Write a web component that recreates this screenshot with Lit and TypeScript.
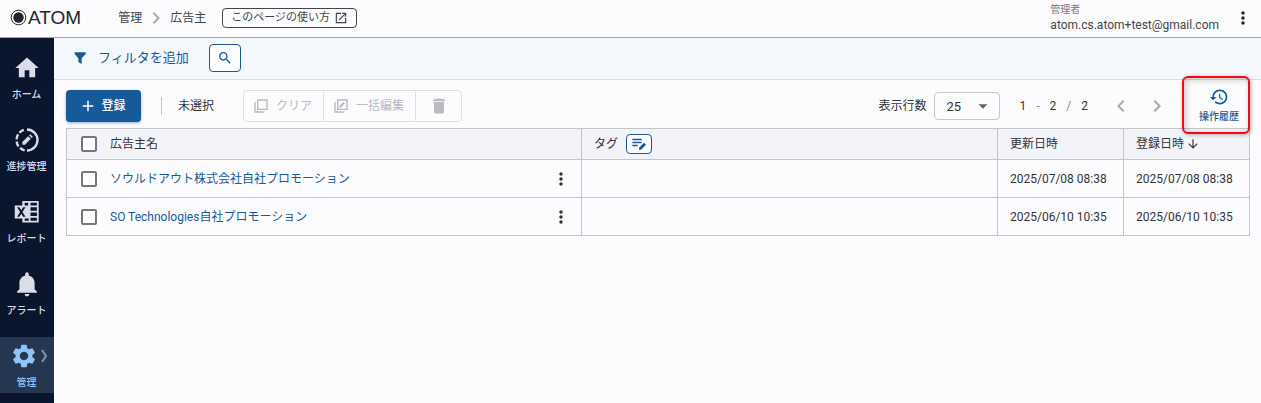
import { LitElement, html, css, svg } from "lit";
import { customElement, property, state } from "lit/decorators.js";
import { classMap } from "lit/directives/class-map.js";

const shapes = {
  home: svg`<path d="M10 20v-6h4v6h5v-8h3L12 3 2 12h3v8z"/>`,
  progress: svg`<g fill="none" stroke="currentColor" stroke-width="2"><path d="M12 3a9 9 0 0 1 0 18"/><path d="M10 20.800A9 9 0 0 1 3 12A9 9 0 0 1 10 3.200" stroke-dasharray="4.500 1.800"/></g><path d="M8 16v-2.300l5-5 2.300 2.300-5 5zM13.800 7.900l.9-.9 2.300 2.300-.9.9z"/>`,
  report: svg`<path fill-rule="evenodd" d="M8 2.500h14v18.500H8v-3.500H1.500v-11H8zm2 1.500v2.500h3V4zm5 0v2.500h5.500V4zm0 4v3h5.500V8zm0 4.500v3h5.500v-3zm0 4.500v2.500h5.500V17zm-5 .5v2h3.500v-2zM3.500 8l2.600 4-2.600 4h2l1.600-2.600L8.700 16h2l-2.600-4 2.600-4h-2l-1.600 2.600L5.500 8z"/>`,
  bell: svg`<path d="M12 22.500c1.100 0 2-.9 2-2h-4c0 1.100.9 2 2 2m6.500-6v-5.500c0-3.070-2-5.640-5-6.320V3.500c0-.83-.67-1.500-1.500-1.500s-1.500.67-1.500 1.500v1.180C7.500 5.360 5.500 7.920 5.500 11v5.500l-2 2v1h17v-1z"/>`,
  gear: svg`<path d="M19.140 12.940c.04-.3.060-.61.060-.94 0-.32-.02-.64-.07-.94l2.030-1.580c.18-.14.23-.41.120-.61l-1.920-3.320c-.12-.22-.37-.29-.59-.22l-2.390.96c-.5-.38-1.030-.7-1.620-.94l-.36-2.540c-.04-.24-.24-.41-.48-.41h-3.840c-.24 0-.43.17-.47.410l-.36 2.540c-.59.240-1.130.570-1.620.940l-2.390-.96c-.22-.08-.47 0-.59.220L2.740 8.870c-.12.210-.08.470.120.610l2.030 1.580c-.05.300-.09.630-.09.940s.02.640.070.940l-2.030 1.580c-.18.140-.23.410-.12.610l1.920 3.320c.120.220.370.290.590.220l2.390-.96c.5.380 1.030.700 1.620.940l.36 2.540c.05.240.240.410.480.410h3.840c.24 0 .44-.17.470-.41l.36-2.540c.59-.24 1.130-.56 1.620-.94l2.390.960c.22.080.470 0 .59-.22l1.920-3.320c.12-.22.070-.47-.12-.61zM12 15.600c-1.980 0-3.600-1.620-3.600-3.600s1.620-3.600 3.600-3.600 3.600 1.620 3.600 3.600-1.620 3.600-3.600 3.600"/>`,
  filter: svg`<path d="M4 3.500h16.500v2.500L14.500 12.500V21l-5-3v-5.500L4 6z"/>`,
  search: svg`<path d="M15.500 14h-.79l-.28-.27C15.410 12.590 16 11.110 16 9.500 16 5.910 13.090 3 9.500 3S3 5.910 3 9.500 5.910 16 9.500 16c1.610 0 3.090-.59 4.230-1.570l.27.280v.79l5 4.990L20.490 19zm-6 0C7.010 14 5 11.990 5 9.500S7.010 5 9.500 5 14 7.010 14 9.500 11.990 14 9.500 14"/>`,
  open: svg`<path d="M19 19H5V5h7V3H3v18h18v-9h-2zM14 3v2h3.590l-9.830 9.830 1.410 1.410L19 6.410V10h2V3z"/>`,
  plus: svg`<path d="M19 13h-6v6h-2v-6H5v-2h6V5h2v6h6z"/>`,
  clear: svg`<path d="M22 2H6v16h16zm-2 14H8V4h12zM2 6v16h15v-2H4V6z"/>`,
  bulk: svg`<path d="M22 2H6v16h16zm-2 14H8V4h12zM2 6v16h15v-2H4V6zM9.500 14.500v-2L16 6l2 2-6.500 6.500z"/>`,
  trash: svg`<path d="M6 19c0 1.100.9 2 2 2h8c1.100 0 2-.9 2-2V7H6zM19 4h-3.500l-1-1h-5l-1 1H5v2h14z"/>`,
  left: svg`<path d="M15.410 7.410 14 6l-6 6 6 6 1.410-1.410L10.830 12z"/>`,
  right: svg`<path d="M10 6 8.590 7.410 13.170 12l-4.580 4.590L10 18l6-6z"/>`,
  caret: svg`<path d="m6 9.500 6 6 6-6z"/>`,
  more: svg`<path d="M12 8c1.100 0 2-.9 2-2s-.9-2-2-2-2 .9-2 2 .9 2 2 2m0 2c-1.100 0-2 .9-2 2s.9 2 2 2 2-.9 2-2-.9-2-2-2m0 6c-1.100 0-2 .9-2 2s.9 2 2 2 2-.9 2-2-.9-2-2-2"/>`,
  history: svg`<path d="M13 3c-4.970 0-9 4.030-9 9H1l3.890 3.890.07.140L9 12H6c0-3.870 3.130-7 7-7s7 3.130 7 7-3.130 7-7 7c-1.930 0-3.680-.79-4.940-2.060l-1.420 1.420C8.270 19.990 10.510 21 13 21c4.970 0 9-4.030 9-9s-4.030-9-9-9m-1 5v5l4.280 2.540.72-1.210-3.500-2.080V8z"/>`,
  down: svg`<path d="m20 12-1.410-1.410L13 16.170V4h-2v12.170l-5.580-5.590L4 12l8 8z"/>`,
  tagEdit: svg`<path d="M2 4h14v2.500H2zM2 8.500h14v2.500H2zM2 13h8v2.500H2zM12 20.500v-3l7.500-7.500 3 3-7.500 7.500z"/>`,
};
type Shape = keyof typeof shapes;

@customElement("app-icon")
class AppIcon extends LitElement {
  @property() name: Shape = "home";
  @property({ type: Number }) size = 16;
  static styles = css`
    :host { display: inline-flex; flex: none; }
    svg { display: block; fill: currentColor; }
  `;
  render() {
    return html`<svg viewBox="0 0 24 24" width=${this.size} height=${this.size} aria-hidden="true">${shapes[this.name]}</svg>`;
  }
}

interface NavItem { icon: Shape; label: string; active?: boolean }
interface Advertiser { name: string; updated: string; created: string }

const nav: NavItem[] = [
  { icon: "home", label: "ホーム" },
  { icon: "progress", label: "進捗管理" },
  { icon: "report", label: "レポート" },
  { icon: "bell", label: "アラート" },
  { icon: "gear", label: "管理", active: true },
];

const rows: Advertiser[] = [
  { name: "ソウルドアウト株式会社自社プロモーション", updated: "2025/07/08 08:38", created: "2025/07/08 08:38" },
  { name: "SO Technologies自社プロモーション", updated: "2025/06/10 10:35", created: "2025/06/10 10:35" },
];

@customElement("app-root")
class AppRoot extends LitElement {
  @state() private selected = new Set<number>();

  static styles = css`
    :host {
      display: flex;
      flex-direction: column;
      min-height: 100vh;
      background: #fcfcfe;
      color: #333338;
      font: 12px/16px Roboto, "Noto Sans CJK JP", sans-serif;
      --blue: #175a9a;
      --line: #c4c5cb;
    }
    * { box-sizing: border-box; }
    a { color: inherit; text-decoration: none; }
    button {
      display: inline-flex;
      align-items: center;
      justify-content: center;
      padding: 0;
      border: 0;
      background: none;
      color: inherit;
      font: inherit;
      cursor: pointer;
    }
    .header {
      display: flex;
      align-items: center;
      height: 38px;
      padding: 0 8px 2px 10px;
      border-bottom: 1px solid #a3a4aa;
      box-shadow: 0 1px 2px rgba(0, 0, 0, 0.12);
    }
    .logo { display: flex; align-items: center; gap: 1px; color: #25252d; font: 19px/24px "Liberation Sans", sans-serif; }
    .crumbs { display: flex; align-items: center; gap: 2px; margin-left: 37px; color: #44444a; }
    .crumbs app-icon { color: #aaaab0; }
    .help {
      display: flex;
      align-items: center;
      gap: 4px;
      height: 20px;
      margin-left: 16px;
      padding: 0 8px;
      border: 1px solid #44444a;
      border-radius: 4px;
      color: #44444a;
      font-size: 11px;
    }
    .account { margin-left: auto; color: #44444a; }
    .role { color: #77778c; font-size: 10px; line-height: 14px; }
    .kebab { margin-left: 14px; color: #222226; }
    .body { display: flex; flex: 1; }
    .side {
      display: flex;
      flex-direction: column;
      gap: 16px;
      width: 54px;
      flex: none;
      padding-top: 11px;
      background: #0a162e;
      color: #d9dde8;
      font-size: 10px;
      font-weight: 500;
    }
    .item {
      display: flex;
      flex-direction: column;
      align-items: center;
      gap: 5px;
      height: 56px;
      padding: 5px 1px 0 0;
      position: relative;
    }
    .item.active { background: #253650; color: #90c4f8; }
    .item.active app-icon { margin-right: 5px; }
    .arrow { position: absolute; right: 6px; top: 11px; color: #7f95b2; }
    .main { flex: 1; min-width: 0; }
    .filters {
      display: flex;
      align-items: center;
      gap: 20px;
      height: 42px;
      padding: 0 18px 1px;
      border-bottom: 1px solid #d9dde4;
      background: #f4f8fd;
      color: var(--blue);
      font-size: 13px;
    }
    .add { gap: 10px; }
    .search { width: 32px; height: 28px; border: 1px solid var(--blue); border-radius: 4px; background: #fcfcfe; }
    .content { padding: 0 11px 0 12px; }
    .tools { display: flex; align-items: center; height: 48px; padding-top: 4px; position: relative; }
    .create {
      gap: 4px;
      width: 75px;
      height: 32px;
      padding-right: 2px;
      border-radius: 4px;
      background: var(--blue);
      color: #fff;
      font-weight: 500;
      box-shadow: 0 1px 3px rgba(23, 90, 154, 0.5);
    }
    .status { margin-left: 20px; padding-left: 16px; border-left: 1px solid var(--line); line-height: 18px; }
    .group { display: flex; height: 32px; margin-left: 29px; border: 1px solid #e0e0e4; border-radius: 4px; color: #bababf; }
    .group button { gap: 7px; padding: 0 11px 0 9px; color: inherit; cursor: default; }
    .group button + button { border-left: 1px solid #e0e0e4; }
    .group .delete { width: 46px; padding: 0; }
    .paging { display: flex; align-items: center; margin-left: auto; }
    .size { display: flex; align-items: center; gap: 8px; }
    .pick { display: grid; align-items: center; }
    .pick > * { grid-area: 1 / 1; }
    .pick app-icon { justify-self: end; margin-right: 8px; color: #66666a; pointer-events: none; }
    select {
      appearance: none;
      width: 66px;
      height: 28px;
      padding: 0 11px;
      border: 1px solid #c8c8cc;
      border-radius: 4px;
      background: transparent;
      color: inherit;
      font: 13px Roboto, sans-serif;
    }
    .range { display: flex; gap: 10px; margin: 0 21px 0 19px; }
    .muted { color: #88888e; }
    .pages { display: flex; gap: 12px; color: #aaaab0; }
    .history {
      flex-direction: column;
      width: 62px;
      margin-left: 19px;
      color: var(--blue);
      font-size: 10px;
      font-weight: 500;
    }
    .history app-icon { margin-bottom: 2px; }
    .marker {
      position: absolute;
      top: -4px;
      right: 0;
      width: 68px;
      height: 58px;
      border: 2px solid #f80810;
      border-radius: 6px;
      box-shadow: 1px 1px 4px rgba(0, 0, 0, 0.3), inset 2px 2px 6px rgba(0, 0, 0, 0.2);
      pointer-events: none;
    }
    table { width: 100%; table-layout: fixed; border-collapse: collapse; }
    th, td { height: 38px; padding: 0 12px; border: 1px solid var(--line); text-align: left; font-weight: 400; }
    th { height: 31px; background: #f3f4fa; }
    .name { width: 515px; }
    .date { width: 126px; }
    .cell { display: flex; align-items: center; }
    .who { gap: 13px; padding-left: 2px; }
    .who a { color: var(--blue); }
    .who .kebab { margin-left: auto; margin-right: -2px; color: #333338; }
    input {
      appearance: none;
      width: 16px;
      height: 16px;
      margin: 0;
      border: 2px solid #77777c;
      border-radius: 2px;
      background: #fff;
    }
    input:checked { border-color: var(--blue); background: var(--blue); }
    .tag { gap: 8px; }
    .tag button { width: 26px; height: 20px; border: 1px solid var(--blue); border-radius: 4px; color: var(--blue); background: #fcfcfe; }
    .sort { gap: 2px; }
  `;

  private toggle(index: number) {
    const next = new Set(this.selected);
    next.has(index) ? next.delete(index) : next.add(index);
    this.selected = next;
  }

  private toggleAll() {
    this.selected = this.selected.size === rows.length ? new Set() : new Set(rows.keys());
  }

  private renderHeader() {
    return html`<header class="header">
      <a class="logo" href="#"><svg width="17" height="17" viewBox="0 0 17 17" aria-hidden="true"><circle cx="8.5" cy="8.5" r="7.300" fill="none" stroke="currentColor" stroke-width="1"/><circle cx="8.500" cy="8.500" r="5.200" fill="currentColor"/></svg>ATOM</a>
      <nav class="crumbs"><a href="#">管理</a><app-icon name="right" size="24"></app-icon><span>広告主</span></nav>
      <a class="help" href="#">このページの使い方<app-icon name="open" size="14"></app-icon></a>
      <div class="account"><div class="role">管理者</div>atom.cs.atom+test@gmail.com</div>
      <button class="kebab" aria-label="メニュー"><app-icon name="more" size="20"></app-icon></button>
    </header>`;
  }

  private renderTools() {
    return html`<div class="tools">
      <button class="create"><app-icon name="plus" size="18"></app-icon>登録</button>
      <span class="status">未選択</span>
      <div class="group">
        <button disabled><app-icon name="clear" size="16"></app-icon>クリア</button>
        <button disabled><app-icon name="bulk" size="16"></app-icon>一括編集</button>
        <button class="delete" disabled aria-label="削除"><app-icon name="trash" size="20"></app-icon></button>
      </div>
      <div class="paging">
        <label class="size">表示行数
          <span class="pick"><select><option>25</option><option>50</option></select><app-icon name="caret" size="18"></app-icon></span>
        </label>
        <div class="range"><span>1</span><span class="muted">-</span><span>2</span><span class="muted">/</span><span>2</span></div>
        <div class="pages">
          <button aria-label="前へ"><app-icon name="left" size="24"></app-icon></button>
          <button aria-label="次へ"><app-icon name="right" size="24"></app-icon></button>
        </div>
      </div>
      <button class="history"><app-icon name="history" size="20"></app-icon>操作履歴</button>
      <div class="marker"></div>
    </div>`;
  }

  private renderTable() {
    return html`<table>
      <thead><tr>
        <th class="name"><div class="cell who"><input type="checkbox" aria-label="すべて選択" .checked=${this.selected.size === rows.length} @change=${this.toggleAll}>広告主名</div></th>
        <th><div class="cell tag">タグ<button aria-label="タグ編集"><app-icon name="tagEdit" size="16"></app-icon></button></div></th>
        <th class="date">更新日時</th>
        <th class="date"><div class="cell sort">登録日時<app-icon name="down" size="14"></app-icon></div></th>
      </tr></thead>
      <tbody>${rows.map((row, i) => html`<tr>
        <td><div class="cell who">
          <input type="checkbox" aria-label=${row.name} .checked=${this.selected.has(i)} @change=${() => this.toggle(i)}>
          <a href="#">${row.name}</a>
          <button class="kebab" aria-label="操作"><app-icon name="more" size="20"></app-icon></button>
        </div></td>
        <td></td><td>${row.updated}</td><td>${row.created}</td>
      </tr>`)}</tbody>
    </table>`;
  }

  render() {
    return html`${this.renderHeader()}
      <div class="body">
        <nav class="side">${nav.map((n) => html`<a href="#" class=${classMap({ item: true, active: !!n.active })}>
          <app-icon name=${n.icon} size="28"></app-icon>${n.label}
          ${n.active ? html`<svg class="arrow" width="8" height="16" viewBox="0 0 8 16" fill="none" stroke="currentColor" stroke-width="2" aria-hidden="true"><path d="M2 2l4 6-4 6"/></svg>` : ""}
        </a>`)}</nav>
        <main class="main">
          <div class="filters">
            <button class="add"><app-icon name="filter" size="16"></app-icon>フィルタを追加</button>
            <button class="search" aria-label="検索"><app-icon name="search" size="16"></app-icon></button>
          </div>
          <div class="content">${this.renderTools()}${this.renderTable()}</div>
        </main>
      </div>`;
  }
}
